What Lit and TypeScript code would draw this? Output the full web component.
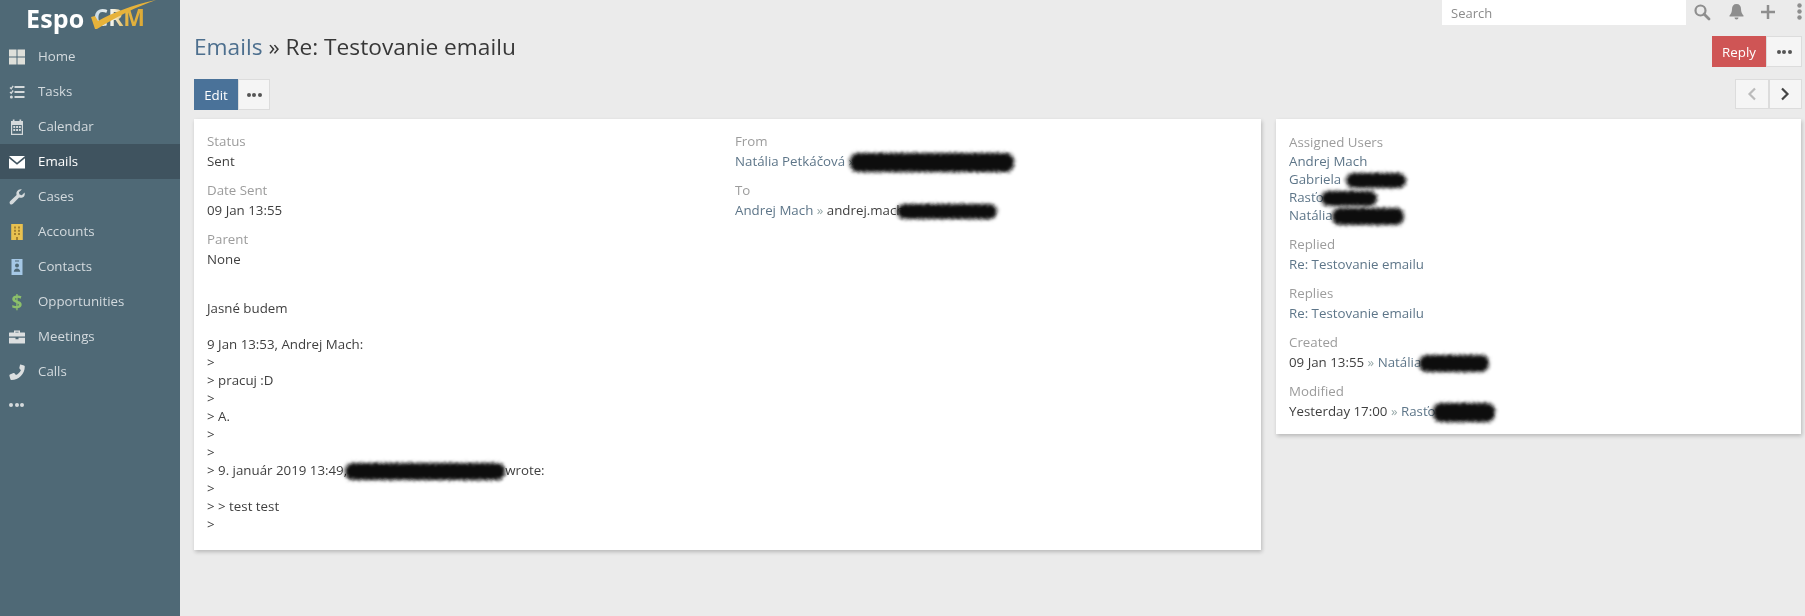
import { LitElement, html, css, svg } from "lit";
import { customElement } from "lit/decorators.js";

const ic = (body: unknown, cls = "") => html`<svg class="ic ${cls}" viewBox="0 0 16 16" width="16" height="16">${body}</svg>`;

const icons: Record<string, unknown> = {
  home: ic(svg`<g fill="#dfe0da"><rect x="0" y="0.500" width="7.500" height="7"/><rect x="8.500" y="0.500" width="7.500" height="7"/><rect x="0" y="8.500" width="7.500" height="7"/><rect x="8.500" y="8.500" width="7.500" height="7"/></g>`),
  tasks: ic(svg`<g fill="none" stroke="#d5dadc"><path d="M1 3.500l1.200 1.200L4.200 1.800M1 8l1.200 1.200L4.200 6.500" stroke-width="1.300"/><path d="M5.500 3h10M5.500 8h10M5.500 13h10" stroke-width="2"/></g><circle cx="2.400" cy="13" r="1.500" fill="#d5dadc"/>`),
  calendar: ic(svg`<path fill="#d5dadc" fill-rule="evenodd" d="M3.800 0.500h1.700V2h5V.5h1.700V2h1.800v14H2V2h1.800zM3.200 6v8.800h9.600V6zM4.300 7h1.900v1.900H4.300zM7.100 7h1.900v1.900H7.100zM9.900 7h1.900v1.900H9.900zM4.300 10h1.900v1.900H4.300zM7.100 10h1.900v1.900H7.100zM9.900 10h1.900v1.900H9.900z"/>`),
  emails: ic(svg`<path fill="#fff" d="M0 2h16L8 8.800zM0 4.200l8 6.600 8-6.600V14.500H0z"/>`),
  cases: ic(svg`<path fill="#d5dadc" d="M15.600 3.600c.5 1.900-.1 3.600-1.600 4.600-1.200.8-2.700.8-3.900.3L4 14.800c-.9.900-2.200.9-2.900.1-.8-.8-.7-2 .2-2.900L7.600 6c-.4-1.300-.3-2.700.5-3.800C9.200.7 11-.1 12.800.4L9.900 3.300l.6 2.300 2.300.7z"/>`),
  accounts: ic(svg`<path fill="#e9c14f" d="M2.200 0h11.600v16H2.200z"/><path fill="#a5812f" d="M5 2.500h2v2H5zM9 2.500h2v2H9zM5 5.800h2v2H5zM9 5.800h2v2H9zM5 9.100h2v2H5zM9 9.100h2v2H9zM7 13h2v3H7z"/>`),
  contacts: ic(svg`<path fill="#a5c8e6" fill-rule="evenodd" d="M2.500 0h11v16h-11zM6 1.500v1h4v-1zM8 4.500a2 2 0 100 4 2 2 0 000-4zM4.800 12.800h6.400c0-2-1.400-3.300-3.200-3.300s-3.200 1.300-3.200 3.300z"/>`),
  opportunities: html`<span class="dollar">$</span>`,
  meetings: ic(svg`<path fill="#dcdfe0" d="M5 1.500h6v2h4.500a.5.500 0 01.5.5v3.500H0V4a.5.500 0 01.5-.5H5zM6.400 2.800v.7h3.200v-.7zM0 8.700h6.500v1.500h3V8.700H16V14a.5.500 0 01-.5.5H.5A.5.500 0 010 14z"/>`),
  calls: ic(svg`<path fill="#dcdfe0" d="M11.500.5l3.500 1c.5.1.8.6.8 1 0 7.500-6 13.500-13.400 13.500-.5 0-.9-.3-1-.8l-1-3.500c-.1-.5.100-.9.500-1.100l3.500-1.500c.4-.2.900-.1 1.200.3l1.400 1.700c2.100-1 3.900-2.800 4.900-4.900L10.700 4.800c-.4-.3-.5-.8-.3-1.200L11 1c.1-.4.100-.5.500-.5z"/>`),
};

const dots = html`<span class="dots"><i></i><i></i><i></i></span>`;

const blot = (w: number, ml = 0, mr = 0, h = 15) =>
  html`<span class="blot" style="width:${w}px;height:${h}px;margin-left:${ml}px;margin-right:${mr}px"></span>`;

const NAV = ["Home", "Tasks", "Calendar", "Emails", "Cases", "Accounts", "Contacts", "Opportunities", "Meetings", "Calls"];

@customElement("app-root")
export class AppRoot extends LitElement {
  static styles = css`
    :host { display: grid; grid-template-columns: 180px 1fr; width: 1805px; height: 616px; overflow: hidden;
      background: #ebebeb; font-family: "Open Sans", sans-serif; font-size: 13.300px; color: #3f3f3f; filter: blur(0.35px); }
    a { color: #5e7689; text-decoration: none; }
    .filters { position: absolute; width: 0; height: 0; }
    .side { background: #4f6976; color: #d3dade; }
    .logo { height: 39px; position: relative; padding-left: 26px; box-sizing: border-box; display: flex; align-items: flex-start; line-height: 36px; font-weight: 700; font-size: 25px; color: #fff; letter-spacing: .2px; }
    .logo .crm { margin-left: 9px; font-size: 23px; line-height: 34px; font-weight: 700; letter-spacing: 0; color: transparent;
      background: linear-gradient(90deg, #c5d8e6 0%, #f4f4ec 35%, #e4b441 65%, #dca935 100%); -webkit-background-clip: text; background-clip: text; }
    .logo svg { position: absolute; left: 88px; top: 0; }
    .item { height: 35px; display: flex; align-items: center; padding-left: 9px; gap: 13px; }
    .item .lb { margin-top: -2px; }
    .item.active { background: #3f535f; color: #fff; }
    .icw { width: 16px; display: flex; justify-content: center; }
    .ic { display: block; }
    .dollar { color: #8cc06a; font-weight: 700; font-size: 19px; line-height: 16px; }
    .more { height: 32px; padding-left: 9px; display: flex; align-items: center; color: #d5dadc; }
    .dots { display: inline-flex; gap: 1.500px; }
    .dots i { width: 4px; height: 4px; border-radius: 50%; background: currentColor; display: block; }
    .main { padding-right: 3px; padding-left: 14px; display: flex; flex-direction: column; }
    .nav { height: 36px; display: flex; justify-content: flex-end; align-items: flex-start; }
    .search { width: 244px; height: 25px; background: #fff; color: #8b8b8b; box-sizing: border-box; padding-left: 9px; line-height: 26px; font-size: 13px; margin-right: 7px; }
    .nav-ic { color: #8e8e8e; display: flex; align-items: center; height: 23px; }
    .bell { margin-left: 18px; }
    .plus { margin-left: 17px; }
    .vdots { margin-left: 22px; }
    .head { display: flex; justify-content: space-between; align-items: flex-start; height: 31px; }
    .title { font-size: 22.700px; color: #383838; line-height: 22px; margin: 0; font-weight: 400; }
    .title a { color: #4d6f8e; }
    .group { display: flex; }
    .btn { height: 31px; box-sizing: border-box; display: flex; align-items: center; justify-content: center; font-size: 13.300px; }
    .btn.blue { width: 44px; background: #4a7299; color: #fff; }
    .btn.red { width: 54px; background: #cf5555; color: #fff; }
    .btn.plain { width: 36px; background: #f5f5f5; border: 1px solid #dcdcdc; color: #555; }
    .tools { display: flex; justify-content: space-between; margin-top: 12px; }
    .tools .btn.plain { width: 32px; }
    .tools .pager .btn.plain { width: 33.500px; height: 30px; }
    .cards { display: grid; grid-template-columns: 1067px 525px; gap: 15px; margin-top: 9px; align-items: start; }
    .card { background: #fff; box-shadow: 1px 2px 4px rgba(0,0,0,.22); padding: 12px 13px; box-sizing: border-box; }
    .main-card { height: 431px; }
    .side-card { height: 315px; padding-top: 13px; }
    .cols { display: grid; grid-template-columns: 528px 1fr; }
    .f { margin-bottom: 9px; line-height: 20px; white-space: nowrap; }
    .f label { display: block; color: #9c9c9c; line-height: 20px; }
    .f.tall { margin-bottom: 10px; }
    .line { display: block; line-height: 18px; white-space: nowrap; }
    .body { margin-top: 21px; line-height: 18px; }
    .body p { margin: 0 0 18px; }
    .gt { display: block; height: 18px; white-space: pre; }
    .blot { display: inline-block; vertical-align: middle; margin-top: -8px; margin-bottom: -8px; background: #0b0b0b; border-radius: 8px; filter: url(#rough); }
    .sep { color: #9aa; }
  `;

  render() {
    return html`
      <svg class="filters" aria-hidden="true"><filter id="rough" x="-20%" y="-60%" width="140%" height="220%">
        <feGaussianBlur in="SourceGraphic" stdDeviation="1.800" result="b"/>
        <feTurbulence type="fractalNoise" baseFrequency="0.5" numOctaves="2" seed="4" result="n"/>
        <feDisplacementMap in="b" in2="n" scale="5" xChannelSelector="R" yChannelSelector="G" result="d"/>
        <feGaussianBlur in="d" stdDeviation="1.100"/>
      </filter></svg>
      <aside class="side">
        <div class="logo">Espo<span class="crm">CRM</span>
          <svg width="70" height="32" viewBox="0 0 70 32"><path fill="#e6b23a" d="M3 17l4-1 3 5C24 13 44 5 68 0 48 7 30 16 9 29H7z"/></svg>
        </div>
        ${NAV.map((n) => html`<div class="item ${n === "Emails" ? "active" : ""}"><span class="icw">${icons[n.toLowerCase()]}</span><span class="lb">${n}</span></div>`)}
        <div class="more">${dots}</div>
      </aside>
      <main class="main">
        <div class="nav">
          <div class="search">Search</div>
          <div class="nav-ic">
            <svg width="18" height="18" viewBox="0 0 18 18"><circle cx="7.500" cy="7.500" r="5" fill="none" stroke="currentColor" stroke-width="2.200"/><path d="M11 11l5 5" stroke="currentColor" stroke-width="2.800" stroke-linecap="round"/></svg>
            <svg class="bell" width="15" height="17" viewBox="0 0 15 17"><path fill="currentColor" d="M7.500 1c3 0 4.500 2 4.500 5 0 3 1 5 2.500 6.500v1H.5v-1C2 11 3 9 3 6c0-3 1.500-5 4.500-5zM5.500 14.500h4a2 2 0 01-4 0z"/></svg>
            <svg class="plus" width="14" height="14" viewBox="0 0 14 14"><path d="M7 0v14M0 7h14" stroke="currentColor" stroke-width="2.500"/></svg>
            <svg class="vdots" width="5" height="17" viewBox="0 0 5 17"><circle cx="2.500" cy="2.500" r="2.200" fill="currentColor"/><circle cx="2.500" cy="8.500" r="2.200" fill="currentColor"/><circle cx="2.500" cy="14.500" r="2.200" fill="currentColor"/></svg>
          </div>
        </div>
        <div class="head">
          <h1 class="title"><a>Emails</a> » Re: Testovanie emailu</h1>
          <div class="group"><div class="btn red">Reply</div><div class="btn plain">${dots}</div></div>
        </div>
        <div class="tools">
          <div class="group"><div class="btn blue">Edit</div><div class="btn plain">${dots}</div></div>
          <div class="group pager">
            <div class="btn plain"><svg width="10" height="14" viewBox="0 0 10 14"><path d="M8 1.500L2.500 7 8 12.500" fill="none" stroke="#bbb" stroke-width="2.200"/></svg></div>
            <div class="btn plain"><svg width="10" height="14" viewBox="0 0 10 14"><path d="M2 1.500L7.500 7 2 12.500" fill="none" stroke="#444" stroke-width="2.200"/></svg></div>
          </div>
        </div>
        <div class="cards">
          <section class="card main-card">
            <div class="cols">
              <div>
                <div class="f"><label>Status</label>Sent</div>
                <div class="f"><label>Date Sent</label>09 Jan 13:55</div>
                <div class="f"><label>Parent</label>None</div>
              </div>
              <div>
                <div class="f"><label>From</label><a>Natália Petkáčová</a> <span class="sep">»</span>${blot(164, -5, 0, 19)}</div>
                <div class="f"><label>To</label><a>Andrej Mach</a> <span class="sep">»</span> andrej.mach${blot(100, -7, 0, 15)}</div>
              </div>
            </div>
            <div class="body">
              <p>Jasné budem</p>
              <span class="line">9 Jan 13:53, Andrej Mach:</span>
              <span class="gt">&gt;</span>
              <span class="gt">&gt; pracuj :D</span>
              <span class="gt">&gt;</span>
              <span class="gt">&gt; A.</span>
              <span class="gt">&gt;</span>
              <span class="gt">&gt;</span>
              <span class="gt">&gt; 9. január 2019 13:49,${blot(160, -2, 0, 17)}wrote:</span>
              <span class="gt">&gt;</span>
              <span class="gt">&gt; &gt; test test</span>
              <span class="gt">&gt;</span>
            </div>
          </section>
          <section class="card side-card">
            <div class="f tall"><label>Assigned Users</label>
              <span class="line"><a>Andrej Mach</a></span>
              <span class="line"><a>Gabriela</a>${blot(60, 5, 0, 15)}</span>
              <span class="line"><a>Rasťo</a>${blot(56, -3, 0, 15)}</span>
              <span class="line"><a>Natália</a>${blot(72, -1, 0, 17)}</span>
            </div>
            <div class="f"><label>Replied</label><a>Re: Testovanie emailu</a></div>
            <div class="f"><label>Replies</label><a>Re: Testovanie emailu</a></div>
            <div class="f"><label>Created</label>09 Jan 13:55 <span class="sep">»</span> <a>Natália</a>${blot(70, -2, 0, 17)}</div>
            <div class="f"><label>Modified</label>Yesterday 17:00 <span class="sep">»</span> <a>Rasťo</a>${blot(62, -3, 0, 19)}</div>
          </section>
        </div>
      </main>
    `;
  }
}
